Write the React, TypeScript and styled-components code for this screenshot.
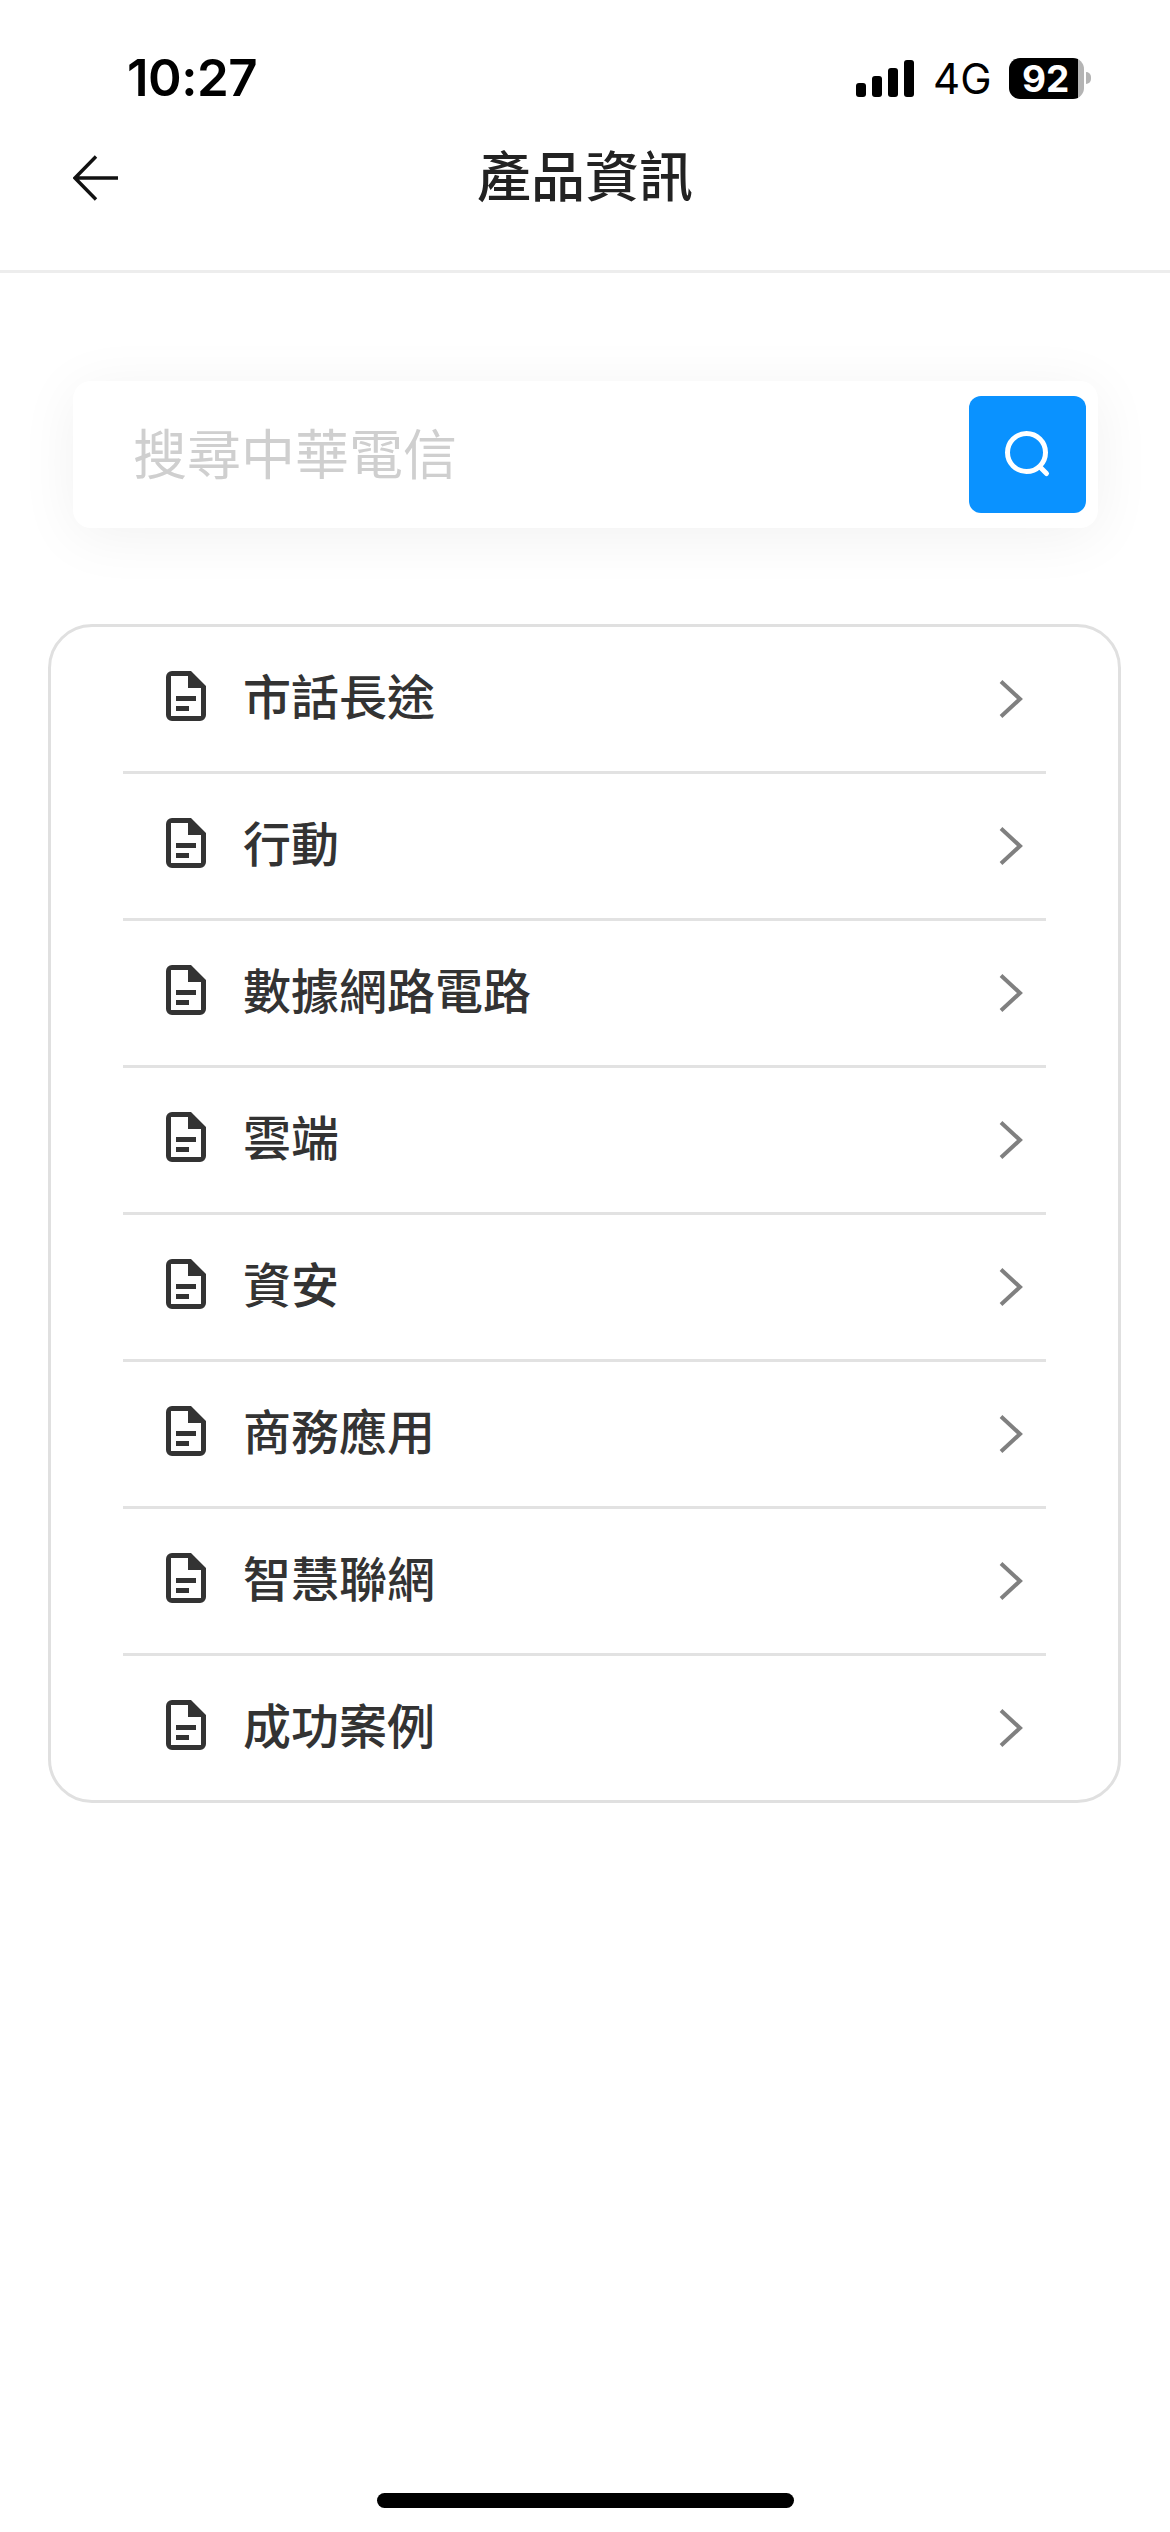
import { FC } from "react";
import styled, { createGlobalStyle } from "styled-components";

const GlobalStyle = createGlobalStyle`
  html, body {
    margin: 0;
    padding: 0;
    background: #fff;
  }
  * {
    box-sizing: border-box;
  }
`;

const Page = styled.div`
  width: 1170px;
  height: 2532px;
  display: flex;
  flex-direction: column;
  background: #fff;
  overflow: hidden;
  font-family: "Noto Sans CJK TC", "Noto Sans", sans-serif;
`;

const StatusBar = styled.div`
  height: 130px;
  padding: 52px 79px 0 127px;
  display: flex;
  justify-content: space-between;
  align-items: flex-start;
  font-family: Inter, "Liberation Sans", sans-serif;
  color: #000;
`;

const Clock = styled.div`
  font-size: 51px;
  line-height: 52px;
  font-weight: 600;
  letter-spacing: -0.5px;
`;

const StatusIcons = styled.div`
  display: flex;
  align-items: center;
  height: 42px;
  margin-top: 5px;
`;

const SignalBars = styled.div`
  display: flex;
  align-items: flex-end;
  gap: 6px;
  height: 37px;
`;

const SignalBar = styled.span<{ $height: number }>`
  width: 10px;
  height: ${(p) => p.$height}px;
  border-radius: 3px;
  background: #000;
`;

const Network = styled.span`
  margin-left: 19px;
  width: 56px;
  padding-top: 2px;
  font-size: 42px;
  line-height: 42px;
  font-weight: 400;
`;

const Battery = styled.div`
  margin-left: 20px;
  width: 75px;
  height: 41px;
  border-radius: 11px;
  background: linear-gradient(90deg, #000 92%, #b4b4b4 92%);
  color: #fff;
  font-size: 37px;
  line-height: 41px;
  font-weight: 700;
  padding-left: 13px;
`;

const BatteryTip = styled.span`
  width: 5px;
  height: 12px;
  margin-left: 2px;
  border-radius: 0 6px 6px 0;
  background: #b4b4b4;
`;

const Header = styled.div`
  height: 143px;
  padding: 0 0 44px 73px;
  display: flex;
  align-items: center;
  position: relative;
  border-bottom: 3px solid #ededed;
`;

const BackButton = styled.div`
  width: 46px;
  height: 46px;
  display: flex;
`;

const Title = styled.h1`
  position: absolute;
  left: 0;
  right: 0;
  top: 2px;
  margin: 0;
  text-align: center;
  font-size: 54px;
  line-height: 84px;
  font-weight: 500;
  color: #222;
`;

const Content = styled.div`
  padding: 108px 49px 0 48px;
  display: flex;
  flex-direction: column;
  gap: 96px;
`;

const SearchBar = styled.div`
  margin: 0 23px 0 25px;
  height: 147px;
  padding: 0 12px 0 60px;
  display: flex;
  align-items: center;
  justify-content: space-between;
  background: #fff;
  border-radius: 18px;
  box-shadow: 0 8px 60px rgba(0, 0, 0, 0.06);
`;

const Placeholder = styled.div`
  padding-bottom: 6px;
  font-size: 54px;
  line-height: 70px;
  color: #cfcfcf;
`;

const SearchButton = styled.div`
  width: 117px;
  height: 117px;
  border-radius: 12px;
  background: #0a92ff;
  display: flex;
  align-items: center;
  justify-content: center;
`;

const ListCard = styled.div`
  border: 3px solid #e0e0e0;
  border-radius: 44px;
  padding: 0 72px;
`;

const Row = styled.div`
  height: 147px;
  padding: 0 23px 0 43px;
  display: flex;
  align-items: center;
  border-bottom: 3px solid #e2e2e2;
  &:last-child {
    height: 144px;
    border-bottom: none;
  }
`;

const RowIcon = styled.div`
  display: flex;
  margin-bottom: 6px;
`;

const RowLabel = styled.div`
  flex: 1;
  margin-left: 37px;
  padding-bottom: 10px;
  font-size: 48px;
  line-height: 64px;
  font-weight: 500;
  color: #333;
`;

const HomeBar = styled.div`
  margin: auto auto 24px;
  width: 417px;
  height: 15px;
  border-radius: 8px;
  background: #000;
`;

const items = [
  "市話長途",
  "行動",
  "數據網路電路",
  "雲端",
  "資安",
  "商務應用",
  "智慧聯網",
  "成功案例",
];

const BackIcon: FC = () => (
  <svg width="46" height="46" viewBox="0 0 46 46" fill="none">
    <path d="M45 23H3M23 1.5 2 23l21 21.5" stroke="#111" strokeWidth="3.4" />
  </svg>
);

const SearchIcon: FC = () => (
  <svg width="46" height="48" viewBox="0 0 46 48" fill="none">
    <circle cx="21.5" cy="21.5" r="19" stroke="#fff" strokeWidth="5" />
    <path d="M35 36l6.5 6.5" stroke="#fff" strokeWidth="5" strokeLinecap="round" />
  </svg>
);

const DocIcon: FC = () => (
  <svg width="40" height="50" viewBox="0 0 40 50" fill="#333">
    <path
      fillRule="evenodd"
      d="M6 0h19l15 15v29a6 6 0 0 1-6 6H6a6 6 0 0 1-6-6V6a6 6 0 0 1 6-6Zm-1 5v40h30V17H22V5H5Z"
    />
    <rect x="10" y="25" width="20" height="5" />
    <rect x="10" y="35" width="13" height="5" />
  </svg>
);

const ChevronIcon: FC = () => (
  <svg width="24" height="38" viewBox="0 0 24 38" fill="none">
    <path d="M2 1.5 21 19 2 36.5" stroke="#808080" strokeWidth="4" />
  </svg>
);

const App: FC = () => {
  return (
    <Page>
      <GlobalStyle />
      <StatusBar>
        <Clock>10:27</Clock>
        <StatusIcons>
          <SignalBars>
            <SignalBar $height={14} />
            <SignalBar $height={21} />
            <SignalBar $height={29} />
            <SignalBar $height={37} />
          </SignalBars>
          <Network>4G</Network>
          <Battery>92</Battery>
          <BatteryTip />
        </StatusIcons>
      </StatusBar>
      <Header>
        <BackButton>
          <BackIcon />
        </BackButton>
        <Title>產品資訊</Title>
      </Header>
      <Content>
        <SearchBar>
          <Placeholder>搜尋中華電信</Placeholder>
          <SearchButton>
            <SearchIcon />
          </SearchButton>
        </SearchBar>
        <ListCard>
          {items.map((item) => (
            <Row key={item}>
              <RowIcon>
                <DocIcon />
              </RowIcon>
              <RowLabel>{item}</RowLabel>
              <ChevronIcon />
            </Row>
          ))}
        </ListCard>
      </Content>
      <HomeBar />
    </Page>
  );
};

export default App;
